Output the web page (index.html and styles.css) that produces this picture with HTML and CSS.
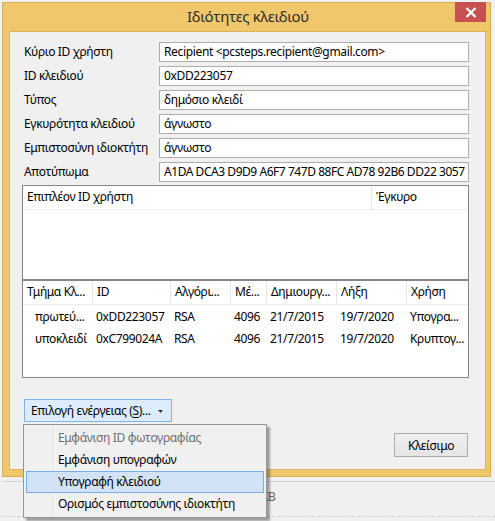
FILE: index.html
```html
<!DOCTYPE html>
<html lang="el">
<head>
<meta charset="utf-8">
<title>Ιδιότητες κλειδιού</title>
<link rel="stylesheet" href="styles.css">
</head>
<body>
<div class="desk">
  <div class="window">
    <div class="titlebar">
      <span class="title">Ιδιότητες κλειδιού</span>
      <span class="close"><svg width="12" height="11" viewBox="0 0 12 11"><path d="M1.5 1 L10.5 10 M10.5 1 L1.5 10" stroke="#fff" stroke-width="2.2" fill="none"/></svg></span>
    </div>
    <div class="client">
      <div class="form">
        <span class="label">Κύριο ID χρήστη</span><span class="field">Recipient &lt;pcsteps.recipient@gmail.com&gt;</span>
        <span class="label">ID κλειδιού</span><span class="field">0xDD223057</span>
        <span class="label">Τύπος</span><span class="field">δημόσιο κλειδί</span>
        <span class="label">Εγκυρότητα κλειδιού</span><span class="field">άγνωστο</span>
        <span class="label">Εμπιστοσύνη ιδιοκτήτη</span><span class="field">άγνωστο</span>
        <span class="label">Αποτύπωμα</span><span class="field fp">A1DA DCA3 D9D9 A6F7 747D 88FC AD78 92B6 DD22 3057</span>
      </div>
      <div class="list list1">
        <div class="head head1">
          <span class="hc">Επιπλέον ID χρήστη</span>
          <span class="hc">Έγκυρο</span>
        </div>
      </div>
      <div class="list list2">
        <div class="head head2 cols">
          <span class="hc">Τμήμα Κλ...</span>
          <span class="hc">ID</span>
          <span class="hc">Αλγόρι...</span>
          <span class="hc">Μέ...</span>
          <span class="hc">Δημιουργ...</span>
          <span class="hc">Λήξη</span>
          <span class="hc">Χρήση</span>
        </div>
        <div class="row cols">
          <span class="c first">πρωτεύ...</span>
          <span class="c">0xDD223057</span>
          <span class="c">RSA</span>
          <span class="c">4096</span>
          <span class="c">21/7/2015</span>
          <span class="c">19/7/2020</span>
          <span class="c">Υπογρα...</span>
        </div>
        <div class="row cols">
          <span class="c first">υποκλειδί</span>
          <span class="c">0xC799024A</span>
          <span class="c">RSA</span>
          <span class="c">4096</span>
          <span class="c">21/7/2015</span>
          <span class="c">19/7/2020</span>
          <span class="c">Κρυπτογ...</span>
        </div>
      </div>
      <div class="actions">
        <span class="btn action">Επιλογή ενέργειας (<u>S</u>)... <svg class="caret" width="5" height="3" viewBox="0 0 5 3"><path d="M0 0 H5 L2.5 3 Z" fill="#333"/></svg></span>
      </div>
      <div class="footer">
        <span class="btn closebtn">Κλείσιμο</span>
      </div>
    </div>
  </div>
  <div class="below">
    <div class="line"></div>
    <div class="kb">KB</div>
    <div class="dash"></div>
  </div>
  <div class="menu">
    <div class="item disabled">Εμφάνιση ID φωτογραφίας</div>
    <div class="item">Εμφάνιση υπογραφών</div>
    <div class="item hot">Υπογραφή κλειδιού</div>
    <div class="item">Ορισμός εμπιστοσύνης ιδιοκτήτη</div>
  </div>
</div>
</body>
</html>
```

FILE: styles.css
```css
html, body {
  margin: 0;
  padding: 0;
}
body {
  width: 495px;
  height: 521px;
  overflow: hidden;
  background: #f0f0f0;
  font-family: "Noto Sans", "Open Sans", sans-serif;
  font-size: 12px;
  letter-spacing: -0.35px;
  color: #000;
}
.desk {
  position: relative;
  width: 495px;
  height: 521px;
  padding: 2px 0 0 2px;
  box-sizing: border-box;
}
.window {
  width: 489px;
  height: 475px;
  box-sizing: border-box;
  background: #f1c76c;
  border: 1px solid #d9ae57;
  display: flex;
  flex-direction: column;
}
.titlebar {
  height: 28px;
  display: grid;
  grid-template-columns: 1fr auto 1fr;
  align-items: start;
}
.title {
  grid-column: 2;
  font-size: 15px;
  color: #2e2e2e;
  line-height: 28px;
  padding-left: 3px;
  margin-top: -1px;
}
.close {
  grid-column: 3;
  justify-self: end;
  width: 31px;
  height: 20px;
  margin-top: -1px;
  margin-right: 4px;
  background: #c75050;
  display: flex;
  align-items: center;
  justify-content: center;
}
.client {
  flex: 1;
  margin: 0 4px 6px 6px;
  background: #f0f0f0;
  border: 1px solid #dbb461;
  box-sizing: border-box;
  padding: 10px 16px 0 12px;
  display: flex;
  flex-direction: column;
}
.form {
  display: grid;
  grid-template-columns: 135px 1fr;
  row-gap: 4px;
  padding-left: 2px;
}
.label {
  line-height: 20px;
  height: 20px;
  white-space: nowrap;
}
.field {
  height: 20px;
  line-height: 18px;
  box-sizing: border-box;
  border: 1px solid #abadb3;
  background: #fff;
  padding: 0 4px;
  white-space: nowrap;
  overflow: hidden;
}
.field.fp {
  letter-spacing: -0.45px;
}
.list {
  background: #fff;
  border: 1px solid #828790;
  box-sizing: border-box;
}
.list1 {
  margin-top: 3px;
  height: 95px;
}
.list2 {
  height: 98px;
}
.head {
  display: grid;
  border-bottom: 1px solid #e7eef7;
}
.head1 {
  grid-template-columns: 349px 1fr;
  height: 23px;
}
.cols {
  display: grid;
  grid-template-columns: 70px 78px 60px 36px 70px 70px 1fr;
}
.head2 {
  height: 24px;
  box-sizing: border-box;
}
.hc {
  line-height: 22px;
  padding-left: 4px;
  border-right: 1px solid #e5e5e5;
  white-space: nowrap;
  overflow: hidden;
}
.hc:last-child {
  border-right: none;
}
.row {
  height: 22px;
  line-height: 22px;
}
.head2 + .row {
  margin-top: 1px;
}
.c {
  padding-left: 3px;
  white-space: nowrap;
  overflow: hidden;
}
.c.first {
  padding-left: 12px;
}
.actions {
  margin-top: 21px;
  display: flex;
  padding-left: 2px;
}
.btn {
  display: inline-flex;
  align-items: center;
  box-sizing: border-box;
  white-space: nowrap;
}
.action {
  height: 23px;
  width: 148px;
  padding-left: 6px;
  background: #dcecfc;
  border: 1px solid #7eb4ea;
}
.action u {
  text-decoration: underline;
  text-underline-offset: 2px;
}
.caret {
  margin-left: 7px;
  margin-top: 1px;
}
.footer {
  margin-top: 11px;
  display: flex;
  justify-content: flex-end;
  padding-right: 1px;
}
.closebtn {
  width: 74px;
  height: 24px;
  justify-content: center;
  background: linear-gradient(#f0f0f0, #e5e5e5);
  border: 1px solid #acacac;
}
.below {
  padding-top: 4px;
}
.line {
  height: 1px;
  background: #c5d2e0;
}
.kb {
  margin-top: 8px;
  padding-left: 259px;
  height: 14px;
  line-height: 14px;
  color: #6a6a6a;
}
.dash {
  margin-top: 12px;
  border-top: 1px dashed #d4d4d4;
}
.menu {
  position: absolute;
  left: 23px;
  top: 424px;
  width: 244px;
  height: 94px;
  box-sizing: border-box;
  background: #f0f0f0 linear-gradient(90deg, transparent 29px, #e2e3e3 29px, #e2e3e3 30px, #ffffff 30px, #ffffff 31px, transparent 31px);
  border: 1px solid #979797;
  box-shadow: 3px 3px 2px rgba(0, 0, 0, 0.35);
  padding: 2px 2px 0 2px;
}
.item {
  height: 22px;
  line-height: 20px;
  box-sizing: border-box;
  padding-left: 31px;
  border: 1px solid transparent;
  white-space: nowrap;
}
.item.disabled {
  color: #6d6d6d;
}
.item.hot {
  background: #d1e3f5;
  border-color: #78aee5;
}
```
